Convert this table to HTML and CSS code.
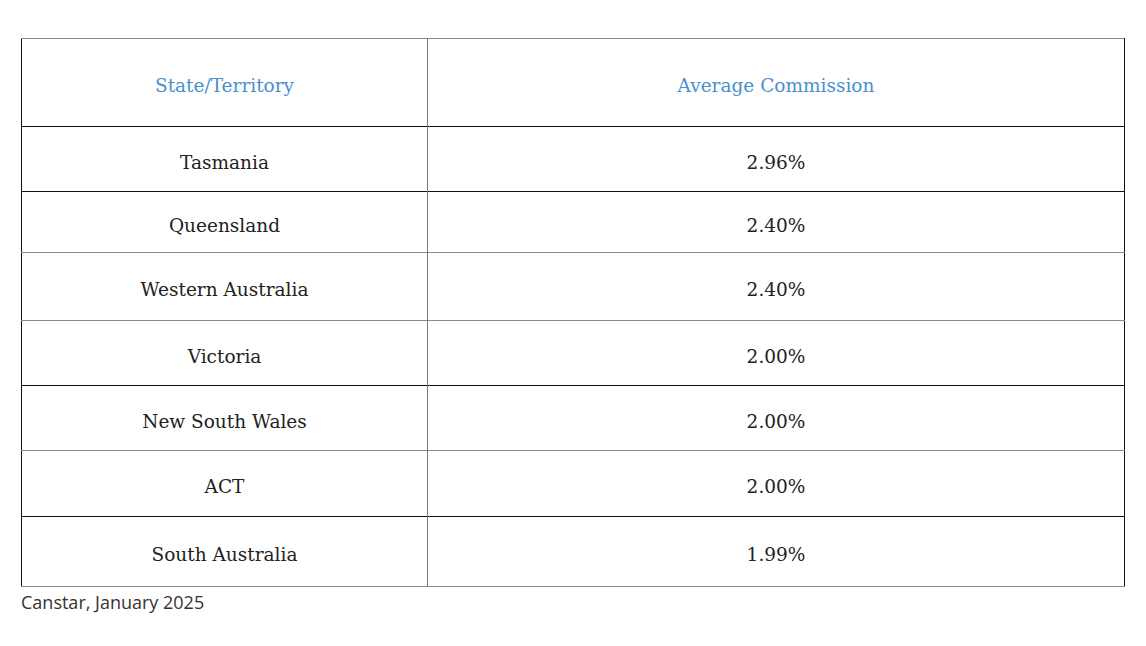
FILE: index.html
```html
<!DOCTYPE html>
<html>
<head>
<meta charset="utf-8">
<link rel="stylesheet" href="styles.css">
</head>
<body>
<div class="wrap">
  <table class="tbl">
    <thead>
      <tr class="head"><th class="c1">State/Territory</th><th class="c2">Average Commission</th></tr>
    </thead>
    <tbody>
      <tr class="r1 dark"><td>Tasmania</td><td>2.96%</td></tr>
      <tr class="r2 grey"><td>Queensland</td><td>2.40%</td></tr>
      <tr class="r3 grey"><td>Western Australia</td><td>2.40%</td></tr>
      <tr class="r4 dark"><td>Victoria</td><td>2.00%</td></tr>
      <tr class="r5 grey"><td>New South Wales</td><td>2.00%</td></tr>
      <tr class="r6 dark"><td>ACT</td><td>2.00%</td></tr>
      <tr class="r7 grey"><td>South Australia</td><td>1.99%</td></tr>
    </tbody>
  </table>
  <p class="caption">Canstar, January 2025</p>
</div>
</body>
</html>
```
FILE: styles.css
```css
html, body { margin: 0; padding: 0; background: #fff; }
.wrap { padding: 38px 21px 0 21px; }
.tbl {
  width: 1104px;
  border-collapse: collapse;
  font-family: "DejaVu Serif", "Liberation Serif", serif;
  font-size: 18.5px;
  color: #222;
  border-left: 1px solid #111;
  border-right: 1px solid #111;
  border-top: 1px solid #888;
}
.tbl th, .tbl td {
  text-align: center;
  vertical-align: middle;
  padding: 6px 0 0 0;
  border-left: 1px solid #777;
}
.tbl th:first-child, .tbl td:first-child { border-left: none; }
.tbl th { font-weight: normal; color: #4a8fd0; }
.c1 { width: 405px; }
.head { height: 88px; border-bottom: 1px solid #111; }
.dark { border-bottom: 1px solid #111; }
.grey { border-bottom: 1px solid #888; }
.r1 { height: 65px; }
.r2 { height: 61px; }
.r3 { height: 68px; }
.r4 { height: 65px; }
.r5 { height: 65px; }
.r6 { height: 66px; }
.r7 { height: 70px; }
.caption {
  margin: 3px 0 0 0;
  font-family: "Open Sans", "Noto Sans", sans-serif;
  font-size: 18px;
  color: #333;
}
```
